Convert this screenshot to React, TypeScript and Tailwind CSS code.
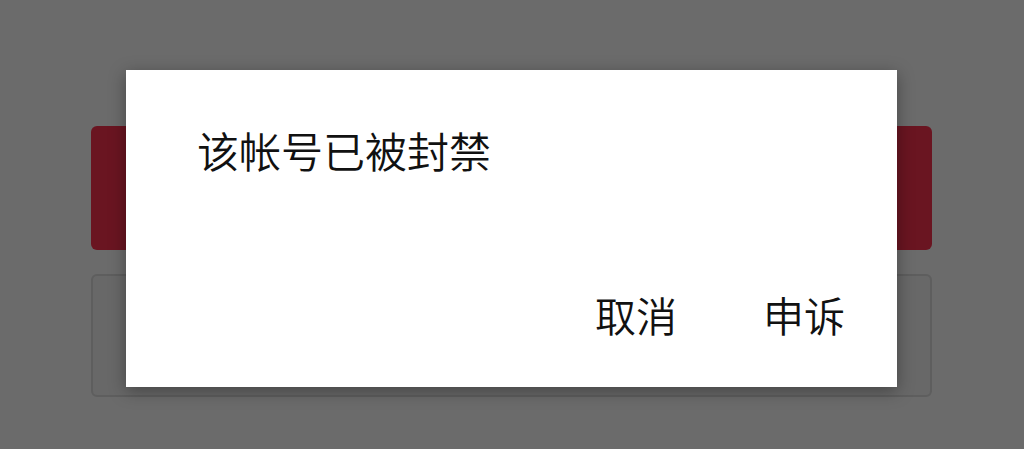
export default function App() {
  return (
    <div
      className="relative h-[449px] w-[1024px] overflow-hidden bg-[#6b6b6b]"
      style={{ fontFamily: '"Noto Sans CJK SC", "Noto Sans", sans-serif' }}
    >
      {/* page behind the dim layer */}
      <div className="flex flex-col gap-[24px] px-[91px] pt-[126px]">
        <div className="h-[124px] w-[841px] rounded-[6px] bg-[#6a1521]" />
        <div className="h-[123px] w-[841px] rounded-[6px] border-2 border-[#5e5e5e] bg-[#686868]" />
      </div>

      {/* dialog */}
      <div className="absolute left-[126px] top-[70px] flex h-[317px] w-[771px] flex-col bg-white shadow-[0_4px_16px_rgba(0,0,0,0.35)]">
        <div className="pl-[71px] pt-[55px] text-[42px] font-[350] leading-[50px] text-[#111]">该帐号已被封禁</div>
        <div className="mt-auto flex justify-end gap-[86px] pb-[48px] pr-[52px] text-[41px] font-[350] leading-[50px] text-[#111]">
          <button>取消</button>
          <button>申诉</button>
        </div>
      </div>
    </div>
  )
}
